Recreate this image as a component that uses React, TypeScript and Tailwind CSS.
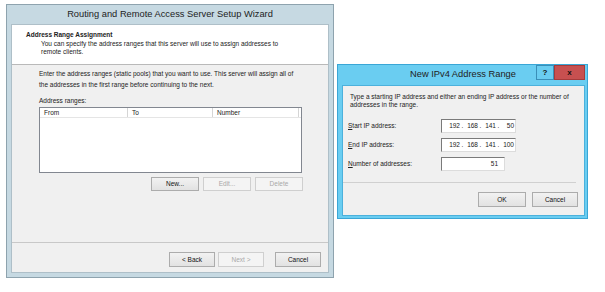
import React from 'react';

const font = { fontFamily: '"Liberation Sans", Arial, sans-serif' };

function Btn({ label, disabled, w = 'w-[48px]', h = 'h-[14px]' }: { label: string; disabled?: boolean; w?: string; h?: string }) {
  return (
    <div
      className={`${w} ${h} flex items-center justify-center border text-[6.5px] whitespace-nowrap ${
        disabled
          ? 'border-[#cfcfcf] bg-[#f4f4f4] text-[#a8a8a8]'
          : 'border-[#acacac] bg-gradient-to-b from-[#f2f2f2] to-[#e2e2e2] text-[#111]'
      }`}
    >
      {label}
    </div>
  );
}

function Field({ children, w = 'w-[75px]', right }: { children: React.ReactNode; w?: string; right?: boolean }) {
  return (
    <div
      className={`${w} h-[14px] border border-[#7a7a7a] border-r-[#dcdcdc] border-b-[#dcdcdc] bg-white flex items-center text-[6.5px] text-[#222] whitespace-nowrap ${
        right ? 'justify-end pr-[6px]' : 'pl-[5px]'
      }`}
    >
      {children}
    </div>
  );
}

function Ip({ parts }: { parts: string[] }) {
  return (
    <div className="flex items-center">
      {parts.map((p, i) => (
        <React.Fragment key={i}>
          {i > 0 && <span className="w-[5px] text-center">.</span>}
          <span className="w-[13px] text-right">{p}</span>
        </React.Fragment>
      ))}
    </div>
  );
}

function WizardWindow() {
  return (
    <div className="ml-[6px] mt-[4px] w-[328px] h-[274px] border border-[#8ea3ae] bg-[#c6d9e2] flex flex-col px-[4px] pb-[4px]">
      <div className="h-[19px] flex items-center justify-center text-[9.3px] text-[#222] whitespace-nowrap">
        Routing and Remote Access Server Setup Wizard
      </div>
      <div className="flex-1 flex flex-col border border-[#aebfc8] bg-[#f0f0f0]">
        <div className="h-[40px] bg-white border-b border-[#b9b9b9] pl-[14px] pt-[6px] text-[6.5px] leading-[8px] text-[#222] whitespace-nowrap">
          <div className="font-bold">Address Range Assignment</div>
          <div className="pl-[15px] mt-[1px]">
            You can specify the address ranges that this server will use to assign addresses to
            <br />
            remote clients.
          </div>
        </div>
        <div className="flex-1 pl-[27px] pr-[10px] pt-[3px] text-[6.5px] text-[#222] whitespace-nowrap">
          <div className="leading-[11px]">
            Enter the address ranges (static pools) that you want to use. This server will assign all of
            <br />
            the addresses in the first range before continuing to the next.
          </div>
          <div className="mt-[6px] leading-[9px]">Address ranges:</div>
          <div className="mt-[2px] w-[263px] h-[66px] border border-[#828790] bg-white flex flex-col">
            <div className="h-[10px] flex border-b border-[#e5e5e5] leading-[9px]">
              <div className="w-[88px] pl-[4px] border-r border-[#d5d5d5]">From</div>
              <div className="w-[85px] pl-[4px] border-r border-[#d5d5d5]">To</div>
              <div className="w-[86px] pl-[4px] border-r border-[#d5d5d5]">Number</div>
            </div>
          </div>
          <div className="mt-[4px] w-[264px] flex justify-end gap-[4px]">
            <Btn label="New..." />
            <Btn label="Edit..." disabled />
            <Btn label="Delete" disabled />
          </div>
        </div>
        <div className="h-[30px] border-t border-[#c8c8c8] flex items-start justify-end pr-[7px] pt-[9px] gap-[3px]">
          <Btn label="< Back" w="w-[46px]" h="h-[15px]" />
          <Btn label="Next >" w="w-[46px]" h="h-[15px]" disabled />
          <div className="w-[5px]" />
          <Btn label="Cancel" w="w-[46px]" h="h-[15px]" />
        </div>
      </div>
    </div>
  );
}

function RangeDialog() {
  return (
    <div className="ml-[3px] mt-[64px] w-[251px] h-[155px] border border-[#3aa6d6] bg-[#6acdf1] flex flex-col pl-[4px] pr-[2px] pb-[2px]">
      <div className="h-[20px] flex items-start">
        <div className="flex-1 flex items-center justify-center h-[19px] pl-[48px] text-[9.3px] text-[#222] whitespace-nowrap">
          New IPv4 Address Range
        </div>
        <div className="w-[18px] h-[15px] border border-[#3a8fb8] bg-[#6acdf1] flex items-center justify-center text-[8px] font-bold text-[#111]">
          ?
        </div>
        <div className="w-[31px] h-[15px] bg-[#c75050] border border-[#a53b3b] flex items-center justify-center text-[8px] font-bold text-[#111]">
          x
        </div>
      </div>
      <div className="flex-1 bg-[#f0f0f0] border border-[#4bb1dc] flex flex-col text-[6.5px] text-[#222] whitespace-nowrap">
        <div className="pl-[7px] pt-[7px] leading-[8px]">
          Type a starting IP address and either an ending IP address or the number of
          <br />
          addresses in the range.
        </div>
        <div className="mt-[10px] pl-[5px] flex flex-col gap-[5px]">
          <div className="flex items-center">
            <div className="w-[93px]">
              <span className="underline">S</span>tart IP address:
            </div>
            <Field>
              <Ip parts={['192', '168', '141', '50']} />
            </Field>
          </div>
          <div className="flex items-center">
            <div className="w-[93px]">
              <span className="underline">E</span>nd IP address:
            </div>
            <Field>
              <Ip parts={['192', '168', '141', '100']} />
            </Field>
          </div>
          <div className="flex items-center">
            <div className="w-[93px]">
              <span className="underline">N</span>umber of addresses:
            </div>
            <Field w="w-[64px]" right>
              51
            </Field>
          </div>
        </div>
        <div className="mt-[11px] mr-[8px] border-t border-[#d0d0d0]" />
        <div className="mt-[9px] flex justify-end gap-[6px] pr-[6px]">
          <Btn label="OK" w="w-[48px]" h="h-[15px]" />
          <Btn label="Cancel" w="w-[46px]" h="h-[15px]" />
        </div>
      </div>
    </div>
  );
}

export default function App() {
  return (
    <div className="w-[605px] h-[292px] bg-white flex items-start" style={font}>
      <WizardWindow />
      <RangeDialog />
    </div>
  );
}
